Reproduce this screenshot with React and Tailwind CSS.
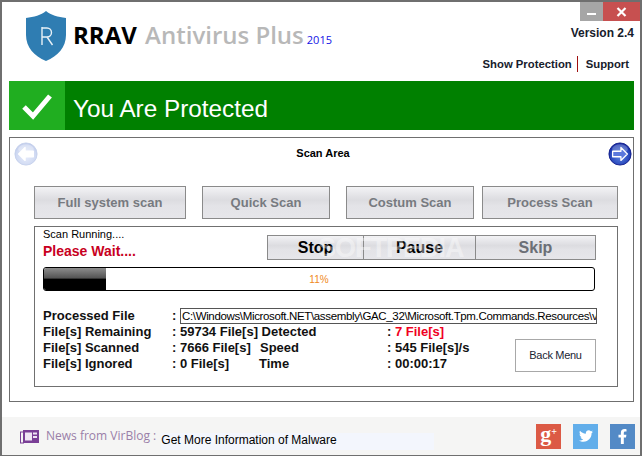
import { FaTwitter, FaFacebookF } from "react-icons/fa";

const ScanButton = ({ width, label }) => (
    <div
        className={`${width} h-[33px] shrink-0 flex items-center justify-center border border-[#8a8a8a] bg-[linear-gradient(#f3f3f5,#e2e2e6_30%,#dcdce0_42%,#e3e3e7_60%,#e6e6ea)] text-[13px] font-bold text-[#777a80]`}
    >
        {label}
    </div>
);

const ControlButton = ({ width, label, color }) => (
    <div
        className={`${width} h-full flex items-center justify-center border-r border-[#8a8a8a] last:border-r-0 text-[16px] font-bold ${color}`}
    >
        {label}
    </div>
);

const ArrowIcon = ({ dir }) => {
    const back = dir === "back";
    return (
        <svg width="24" height="24" viewBox="0 0 26 26">
            <defs>
                <radialGradient id={`ball-${dir}`} cx="50%" cy="60%" r="60%">
                    <stop offset="0%" stopColor={back ? "#e8edfb" : "#5d84e0"} />
                    <stop offset="75%" stopColor={back ? "#cfd9f2" : "#2443b8"} />
                    <stop offset="100%" stopColor={back ? "#bcc8ea" : "#10209a"} />
                </radialGradient>
            </defs>
            <circle cx="13" cy="13" r="12" fill={`url(#ball-${dir})`} stroke={back ? "#c6d0ec" : "#14208c"} />
            <ellipse cx="13" cy="7.5" rx="8.5" ry="5" fill="#fff" opacity={back ? 0.3 : 0.25} />
            <path
                d={back ? "M5 13l7-7v4h9v6h-9v4z" : "M21 13l-7-7v4H5v6h9v4z"}
                fill={back ? "#fff" : "#5a78dc"}
                stroke="#fff"
                strokeWidth="1.4"
                strokeLinejoin="round"
            />
        </svg>
    );
};

const StatRow = ({ label, value, middle, colon, extra, extraColor }) => (
    <div className="flex h-4 items-center whitespace-pre">
        <span className="w-[129px]">{label}</span>
        <span className="w-[87px]">{value}</span>
        <span className="w-[128px]">{middle}</span>
        <span className={extraColor}>
            <span className="text-[#111]">{colon}</span>
            {extra}
        </span>
    </div>
);

const App = () => {
    return (
        <div className="relative w-[642px] h-[456px] flex flex-col overflow-hidden bg-white border-2 border-b border-[#6f6f6f] font-['Liberation_Sans',Arial,sans-serif] text-[#111]">
            {/* header */}
            <div className="h-[79px] shrink-0 flex justify-between">
                <div className="flex items-start">
                    <svg className="ml-[23px] mt-[9px]" width="42" height="50" viewBox="0 0 42 50">
                        <path d="M21 0c5 4 12 6 20 7v17c0 12-8 21-20 26C9 45 1 36 1 24V7c8-1 15-3 20-7z" fill="#2f7db2" />
                        <path d="M17 17h5a4.5 4.5 0 0 1 0 9h-5M17 16v18M22 26l5.5 8" fill="none" stroke="#e8f1f7" strokeWidth="1.4" />
                    </svg>
                    <div className="ml-[6px] mt-[17px] flex items-baseline whitespace-pre font-['Open_Sans',sans-serif] font-semibold leading-[32px]">
                        <span className="text-[24px] font-bold text-black">RRAV </span>
                        <span className="ml-[2px] text-[24px] text-[#b8b8b8]">Antivirus Plus</span>
                        <span className="ml-[3px] text-[11px] font-normal text-[#1414e6]">2015</span>
                    </div>
                </div>
                <div className="flex flex-col items-end">
                    <div className="flex h-[19px]">
                        <div className="w-[23px] bg-[#a6a6a6] flex items-center justify-center">
                            <span className="mt-[5px] w-[9px] h-[2px] bg-white" />
                        </div>
                        <div className="w-[37px] bg-[#c75050] flex items-center justify-center">
                            <svg width="11" height="10" viewBox="0 0 11 10">
                                <path d="M1.5 1l8 8M9.5 1l-8 8" stroke="#fff" strokeWidth="2.2" />
                            </svg>
                        </div>
                    </div>
                    <div className="mr-[6px] mt-[4px] text-[12px] font-bold leading-[16px] text-[#17202c]">Version 2.4</div>
                    <div className="mr-[11px] mt-[15px] flex items-center text-[11.3px] font-bold leading-[16px] text-[#17202c]">
                        <span>Show Protection</span>
                        <span className="ml-[5px] mr-[8px] h-4 w-px bg-[#a01010]" />
                        <span>Support</span>
                    </div>
                </div>
            </div>

            {/* status */}
            <div className="ml-[7px] mr-[6px] h-[49px] shrink-0 flex bg-[#008000]">
                <div className="w-14 flex items-center justify-center bg-[#20ae20]">
                    <svg width="32" height="28" viewBox="0 0 32 28">
                        <path d="M3 15l9 9L29 4" fill="none" stroke="#fff" strokeWidth="5" />
                    </svg>
                </div>
                <div className="ml-2 pt-2 flex items-center text-[24.3px] text-white">You Are Protected</div>
            </div>

            {/* scan panel */}
            <div className="ml-[7px] mr-[6px] mt-[7px] h-[265px] shrink-0 flex flex-col border border-[#6f6f6f] pl-6 pr-[15px]">
                <div className="-ml-6 -mr-[15px] h-[48px] shrink-0 flex items-start justify-between pl-1 pr-[1px] pt-1">
                    <ArrowIcon dir="back" />
                    <span className="mt-[4px] text-[11px] font-bold leading-[14px] text-black">Scan Area</span>
                    <ArrowIcon dir="next" />
                </div>
                <div className="flex">
                    <ScanButton width="w-[152px]" label="Full system scan" />
                    <ScanButton width="w-[128px] ml-[16px]" label="Quick Scan" />
                    <ScanButton width="w-[128px] ml-[16px]" label="Costum Scan" />
                    <ScanButton width="w-[136px] ml-[8px]" label="Process Scan" />
                </div>

                <div className="relative mt-[7px] h-[161px] border border-[#707070] px-2">
                    <div className="flex h-[40px] justify-between">
                        <div className="flex flex-col">
                            <span className="text-[11px] leading-[14px] text-black">Scan Running....</span>
                            <span className="mt-[1px] text-[14px] font-bold leading-[18px] text-[#c8001e]">Please Wait....</span>
                        </div>
                        <div className="mt-[8px] mr-[13px] h-[25px] flex border border-[#8a8a8a] bg-[linear-gradient(#f3f3f5,#e2e2e6_30%,#dcdce0_42%,#e3e3e7_60%,#e6e6ea)]">
                            <ControlButton width="w-[96px]" label="Stop" color="text-black" />
                            <ControlButton width="w-[112px]" label="Pause" color="text-black" />
                            <ControlButton width="w-[119px]" label="Skip" color="text-[#6b6f76]" />
                        </div>
                    </div>
                    <div className="mr-[14px] h-6 flex items-center relative overflow-hidden rounded-[3px] border border-black bg-white">
                        <div className="absolute left-0 inset-y-0 w-[62px] bg-[linear-gradient(#8c8c8c,#555_45%,#000_52%,#000)]" />
                        <span className="w-full text-center text-[10px] text-[#f08a24]">11%</span>
                    </div>

                    <div className="mt-[17px] flex h-4 items-center text-[13px] font-bold whitespace-pre">
                        <span className="w-[129px]">Processed File</span>
                        <span className="w-2">:</span>
                        <div className="w-[417px] h-4 overflow-hidden border border-[#555] pl-[1px] text-[11.5px] font-normal leading-[14px] tracking-[-0.35px] text-black">
                            C:\Windows\Microsoft.NET\assembly\GAC_32\Microsoft.Tpm.Commands.Resources\v
                        </div>
                    </div>
                    <div className="text-[13px] font-bold">
                        <StatRow label="File[s] Remaining" value=": 59734 File[s] Detected" middle="" colon=": " extra="7 File[s]" extraColor="text-[#f00022]" />
                        <StatRow label="File[s] Scanned" value=": 7666 File[s]" middle={<span className="pl-px">Speed</span>} colon=": " extra="545 File[s]/s" />
                        <StatRow label="File[s] Ignored" value=": 0 File[s]" middle="Time" colon=": " extra="00:00:17" />
                    </div>
                    <div className="absolute left-[480px] top-[112px] w-[81px] h-[33px] flex items-center justify-center border border-[#a8a8a8] bg-white text-[11px] tracking-[-0.3px] text-[#1a2433]">
                        Back Menu
                    </div>
                </div>
            </div>

            {/* news */}
            <div className="mt-[15px] flex-1 flex items-center bg-[#f5f5f4]">
                <svg className="ml-[18px]" width="20" height="15" viewBox="0 0 20 15">
                    <rect x="3" y="1" width="16" height="13" fill="#7a3f96" />
                    <rect x="0.5" y="3" width="3" height="11" fill="none" stroke="#7a3f96" />
                    <rect x="5" y="3.5" width="7" height="8" fill="#f0e6f4" />
                    <rect x="13" y="3.5" width="4" height="2" fill="#f0e6f4" />
                    <rect x="13" y="7" width="4" height="2" fill="#f0e6f4" />
                </svg>
                <span className="ml-[6px] font-['Open_Sans',sans-serif] text-[12px] text-[#9a7fa8] whitespace-pre">News from VirBlog : </span>
                <span className="ml-[2px] mt-[10px] w-[273px] h-[17px] bg-[#f3f6fd] text-[12px] leading-[15px] text-black">Get More Information of Malware</span>
                <div className="ml-auto mr-[5px] flex gap-[12px]">
                    <div className="w-[25px] h-[25px] flex items-center justify-center bg-[#dc5a45] text-white font-['Liberation_Serif',serif] font-bold">
                        <span className="text-[22px] leading-[22px] -mt-1">g</span>
                        <span className="text-[10px] leading-[10px] -mt-2">+</span>
                    </div>
                    <div className="w-[25px] h-[25px] flex items-center justify-center bg-[#62aeea] text-white text-[14px]"><FaTwitter /></div>
                    <div className="w-[25px] h-[25px] flex items-center justify-center bg-[#538ac6] text-white text-[15px]"><FaFacebookF /></div>
                </div>
            </div>

            {/* watermark */}
            <span className="absolute left-[316px] top-[226px] text-[27px] font-bold tracking-[-1px] text-white/40">SOFTPEDIA</span>
        </div>
    );
};

export default App;
